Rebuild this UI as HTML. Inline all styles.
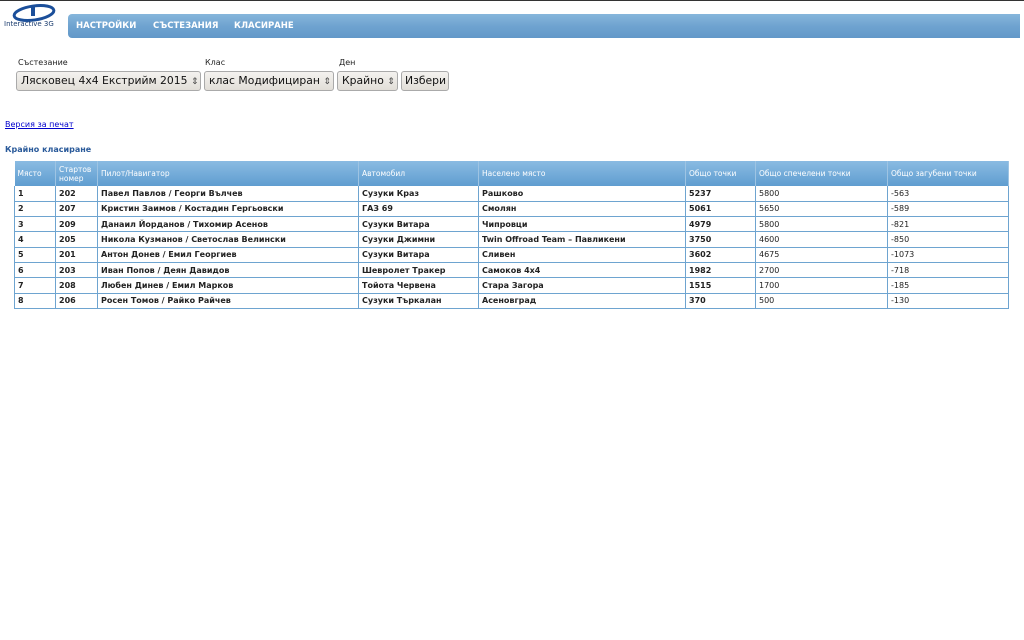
<!DOCTYPE html>
<html><head><meta charset="utf-8"><style>
*{margin:0;padding:0;box-sizing:border-box}
body{width:1024px;height:640px;background:#fff;font-family:"DejaVu Sans",sans-serif;position:relative;overflow:hidden;border-top:1px solid #333}
.logo{position:absolute;left:4px;top:3px;width:60px;height:28px}
.logo span{position:absolute;left:0;top:16px;font-size:7px;color:#1b3c6e;white-space:nowrap}
.nav{position:absolute;left:68px;top:13px;width:952px;height:24px;border-radius:4px 0 0 4px;background:linear-gradient(#86b6dc,#6fa3d0 50%,#6298c8)}
.nav a{position:absolute;top:7px;color:#fff;font-weight:bold;font-size:8.5px;text-decoration:none}
.lbl{position:absolute;top:57px;font-size:8px;color:#222}
.sel{position:absolute;top:70px;height:20px;border:1px solid #aaa;border-radius:3px;background:linear-gradient(#f4f2ef,#e2ded8);font-size:10.8px;color:#111;padding:2px 0 0 4px;white-space:nowrap;overflow:hidden}
.sel i{font-style:normal;font-size:9px;color:#444}
.link{position:absolute;left:5px;top:119px;font-size:8px;color:#00c;text-decoration:underline}
.h{position:absolute;left:5px;top:144px;font-size:8px;font-weight:bold;color:#2a5a9a}
table{position:absolute;left:14px;top:160px;width:995px;border-collapse:collapse;font-size:8px}
th{height:25px;background:linear-gradient(#8abbe2,#5f9dd0);color:#fff;font-weight:normal;text-align:left;padding:0 3px;border-right:1px solid #9ec4e3;font-size:7.5px;line-height:9px}
td{height:15.3px;padding:0 3px;border:1px solid #6ea4d0;border-top:none;color:#222}
td.b{font-weight:bold}
</style></head><body>
<div class="logo"><svg width="60" height="18" viewBox="0 0 60 18"><ellipse cx="30" cy="9" rx="20" ry="7" fill="none" stroke="#1b4f9a" stroke-width="3" transform="rotate(-8 30 9)"/><rect x="27" y="3" width="4" height="9" fill="#1b4f9a"/></svg><span>Interactive 3G</span></div>
<div class="nav"><a style="left:8px">НАСТРОЙКИ</a><a style="left:85px">СЪСТЕЗАНИЯ</a><a style="left:166px">КЛАСИРАНЕ</a></div>
<div class="lbl" style="left:18px">Състезание</div>
<div class="lbl" style="left:205px">Клас</div>
<div class="lbl" style="left:339px">Ден</div>
<div class="sel" style="left:16px;width:185px">Лясковец 4x4 Екстрийм 2015 <i>⇕</i></div>
<div class="sel" style="left:204px;width:130px">клас Модифициран <i>⇕</i></div>
<div class="sel" style="left:337px;width:61px">Крайно <i>⇕</i></div>
<div class="sel" style="left:401px;width:48px;padding-left:3px">Избери</div>
<div class="link">Версия за печат</div>
<div class="h">Крайно класиране</div>
<table>
<tr><th style="width:41px">Място</th><th style="width:42px">Стартов<br>номер</th><th style="width:261px">Пилот/Навигатор</th><th style="width:120px">Автомобил</th><th style="width:207px">Населено място</th><th style="width:70px">Общо точки</th><th style="width:132px">Общо спечелени точки</th><th>Общо загубени точки</th></tr>
<tr><td class="b">1</td><td class="b">202</td><td class="b">Павел Павлов / Георги Вълчев</td><td class="b">Сузуки Краз</td><td class="b">Рашково</td><td class="b">5237</td><td>5800</td><td>-563</td></tr>
<tr><td class="b">2</td><td class="b">207</td><td class="b">Кристин Заимов / Костадин Гергьовски</td><td class="b">ГАЗ 69</td><td class="b">Смолян</td><td class="b">5061</td><td>5650</td><td>-589</td></tr>
<tr><td class="b">3</td><td class="b">209</td><td class="b">Данаил Йорданов / Тихомир Асенов</td><td class="b">Сузуки Витара</td><td class="b">Чипровци</td><td class="b">4979</td><td>5800</td><td>-821</td></tr>
<tr><td class="b">4</td><td class="b">205</td><td class="b">Никола Кузманов / Светослав Велински</td><td class="b">Сузуки Джимни</td><td class="b">Twin Offroad Team – Павликени</td><td class="b">3750</td><td>4600</td><td>-850</td></tr>
<tr><td class="b">5</td><td class="b">201</td><td class="b">Антон Донев / Емил Георгиев</td><td class="b">Сузуки Витара</td><td class="b">Сливен</td><td class="b">3602</td><td>4675</td><td>-1073</td></tr>
<tr><td class="b">6</td><td class="b">203</td><td class="b">Иван Попов / Деян Давидов</td><td class="b">Шевролет Тракер</td><td class="b">Самоков 4x4</td><td class="b">1982</td><td>2700</td><td>-718</td></tr>
<tr><td class="b">7</td><td class="b">208</td><td class="b">Любен Динев / Емил Марков</td><td class="b">Тойота Червена</td><td class="b">Стара Загора</td><td class="b">1515</td><td>1700</td><td>-185</td></tr>
<tr><td class="b">8</td><td class="b">206</td><td class="b">Росен Томов / Райко Райчев</td><td class="b">Сузуки Търкалан</td><td class="b">Асеновград</td><td class="b">370</td><td>500</td><td>-130</td></tr>
</table>
</body></html>
